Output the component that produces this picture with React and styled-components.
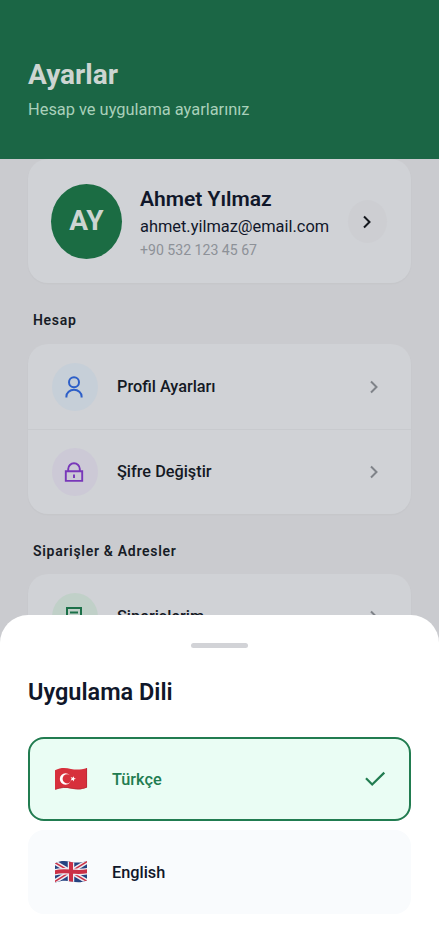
import React from "react";
import styled, { createGlobalStyle } from "styled-components";

const GlobalStyle = createGlobalStyle`
  body {
    margin: 0;
    background: #cacbcf;
    font-family: Roboto, "Liberation Sans", sans-serif;
  }
`;

const Screen = styled.div`
  position: relative;
  width: 100%;
  height: 952px;
  overflow: hidden;
  background: #cacbcf;
`;

const Header = styled.header`
  height: 159px;
  box-sizing: border-box;
  padding: 57px 28px 0;
  background: #1b6645;
`;

const Title = styled.h1`
  margin: 0;
  font-size: 28px;
  line-height: 36px;
  font-weight: 700;
  color: #cdd5d1;
`;

const Subtitle = styled.p`
  margin: 7px 0 0;
  font-size: 16.4px;
  line-height: 20px;
  color: #a9d0ba;
`;

const Content = styled.main`
  padding: 0 28px;
`;

const Card = styled.section`
  border-radius: 20px;
  background: #d0d2d6;
  box-shadow: 0 1px 2px rgba(0, 0, 0, 0.03);
`;

const ProfileCard = styled(Card)`
  display: flex;
  align-items: center;
  height: 124px;
  box-sizing: border-box;
  padding: 0 24px 0 23px;
`;

const Avatar = styled.div`
  display: flex;
  align-items: center;
  justify-content: center;
  width: 71px;
  height: 75px;
  box-sizing: border-box;
  padding-bottom: 2px;
  border-radius: 50%;
  background: #1b6c43;
  color: #cdd5d1;
  font-size: 28px;
  font-weight: 700;
`;

const ProfileInfo = styled.div`
  flex: 1;
  padding: 4px 0 0 18px;
  white-space: nowrap;
`;

const Name = styled.div`
  font-size: 21px;
  line-height: 26px;
  font-weight: 600;
  color: #10172a;
`;

const Email = styled.div`
  margin-top: 3px;
  font-size: 16.4px;
  line-height: 24px;
  color: #10172a;
`;

const Phone = styled.div`
  margin-top: 1px;
  font-size: 14.1px;
  line-height: 20px;
  color: #8d9198;
`;

const RoundButton = styled.button`
  display: flex;
  align-items: center;
  justify-content: center;
  width: 39px;
  height: 43px;
  padding: 2px 1px 0 0;
  border: 0;
  border-radius: 50%;
  background: #cdced2;
`;

const SectionLabel = styled.h2`
  margin: 28px 0 ${(props) => props.$gap}px 5px;
  font-size: 14px;
  line-height: 18px;
  font-weight: 600;
  letter-spacing: 0.7px;
  color: #171c26;
`;

const Row = styled.div`
  display: flex;
  align-items: center;
  height: 85px;
  box-sizing: border-box;
  padding: 0 31px 0 24px;

  & + & {
    border-top: 1px solid #c8cace;
  }
`;

const IconCircle = styled.div`
  display: flex;
  align-items: center;
  justify-content: center;
  width: 46px;
  height: 48px;
  box-sizing: border-box;
  padding-right: 2px;
  margin-right: 19px;
  border-radius: 50%;
  color: ${(props) => props.$color};
  background: ${(props) => props.$background};
`;

const RowLabel = styled.span`
  flex: 1;
  font-size: 16.3px;
  line-height: 24px;
  font-weight: 500;
  color: #141924;
`;

const Svg = styled.svg`
  display: block;
  flex: none;
  fill: none;
`;

const Chevron = styled(Svg)`
  color: ${(props) => props.$color};
`;

const Sheet = styled.div`
  position: absolute;
  left: 0;
  right: 0;
  bottom: 0;
  height: 337px;
  box-sizing: border-box;
  padding: 28px 28px 0;
  border-radius: 28px 28px 0 0;
  background: #fff;
`;

const Handle = styled.div`
  width: 57px;
  height: 5px;
  margin: 0 auto;
  border-radius: 3px;
  background: #d2d3d7;
`;

const SheetTitle = styled.h2`
  margin: 29px 0 29px;
  font-size: 23.5px;
  line-height: 31px;
  font-weight: 600;
  color: #10172a;
`;

const Option = styled.div`
  display: flex;
  align-items: center;
  height: 84px;
  box-sizing: border-box;
  margin-bottom: 9px;
  padding: 0 23px 0 24px;
  border: 2px solid ${(props) => (props.$selected ? "#217c50" : "#f9fbfd")};
  border-radius: 16px;
  background: ${(props) => (props.$selected ? "#eafdf4" : "#f9fbfd")};
  color: ${(props) => (props.$selected ? "#217c50" : "#10172a")};
`;

const OptionLabel = styled.span`
  flex: 1;
  margin-left: 24px;
  padding-top: 1px;
  font-size: 16.3px;
  line-height: 24px;
  font-weight: 500;
`;

const wave = "M1 3.2C7 .2 12 .9 17 1.9S27 2.8 33 .9V20.5C27 23 22 22.3 17 21.4S7 20.5 1 22.7Z";

const ChevronIcon = ({ color }) => (
  <Chevron $color={color} width="12" height="16" viewBox="0 0 12 16" stroke="currentColor" strokeWidth="2">
    <path d="M3 2.5 8.5 8 3 13.5" />
  </Chevron>
);

const UserIcon = () => (
  <Svg width="24" height="24" viewBox="0 0 24 24" stroke="currentColor" strokeWidth="2">
    <circle cx="12" cy="7.2" r="5" />
    <path d="M4.4 22.5V21.5a7.6 6.8 0 0 1 15.2 0V22.5" />
  </Svg>
);

const LockIcon = () => (
  <Svg width="24" height="24" viewBox="0 0 24 24" stroke="currentColor" strokeWidth="1.9">
    <path d="M3.8 11.3h16.4v9.6H3.8zM6.2 11.2V9.1a5.8 5.8 0 0 1 11.6 0v2.1M12 14.4v3.6" />
  </Svg>
);

const ReceiptIcon = () => (
  <Svg width="24" height="24" viewBox="0 0 24 24" stroke="currentColor" strokeWidth="2">
    <path d="M5 21V3h14V21zM8 7.5h8M8 12h8" />
  </Svg>
);

const TurkishFlag = () => (
  <Svg width="34" height="24" viewBox="0 0 34 24">
    <path d={wave} fill="#d7303c" />
    <mask id="crescent">
      <circle cx="11.5" cy="12" r="5.7" fill="#fff" />
      <circle cx="13.2" cy="11.8" r="4.6" fill="#000" />
    </mask>
    <path d="M0 0h34v24H0z" fill="#fff" mask="url(#crescent)" />
    <path d="m19.9 9.2-1.3 1.5-2-.6 1.1 1.7-1.1 1.7 2-.5 1.3 1.5.1-2 1.9-.8-1.9-.7z" fill="#fff" />
    <path d="M1.4 22.3C7 20.2 12 20 17 21.1S27 22.6 32.6 20.2V1.2" stroke="#b52a35" strokeWidth=".8" />
  </Svg>
);

const BritishFlag = () => (
  <Svg width="34" height="24" viewBox="0 0 34 24">
    <clipPath id="uk-wave">
      <path d={wave} />
    </clipPath>
    <g clipPath="url(#uk-wave)">
      <path d="M0 0h34v24H0z" fill="#264381" />
      <path d="M0 2 34 22M0 22 34 1" stroke="#eeebf1" strokeWidth="4.5" />
      <path d="M0 2 34 22M0 22 34 1" stroke="#cb3046" strokeWidth="1.5" />
      <path d="M17 0v24M0 12.5C11 9 22 14 34 11" stroke="#eeebf1" strokeWidth="6.5" />
      <path d="M17 0v24M0 12.5C11 9 22 14 34 11" stroke="#cb3046" strokeWidth="4" />
    </g>
  </Svg>
);

const CheckIcon = () => (
  <Svg width="22" height="18" viewBox="0 0 22 18" stroke="currentColor" strokeWidth="2.2">
    <path d="M2 8.3 8.2 14.5 20.3 2.6" />
  </Svg>
);

const SettingsRow = ({ label, icon, color, background }) => (
  <Row>
    <IconCircle $color={color} $background={background}>{icon}</IconCircle>
    <RowLabel>{label}</RowLabel>
    <ChevronIcon color="#7f8389" />
  </Row>
);

const LanguageOption = ({ flag, label, selected }) => (
  <Option $selected={selected}>
    {flag}
    <OptionLabel>{label}</OptionLabel>
    {selected && <CheckIcon />}
  </Option>
);

const App = () => {
  return (
    <Screen>
      <GlobalStyle />
      <Header>
        <Title>Ayarlar</Title>
        <Subtitle>Hesap ve uygulama ayarlarınız</Subtitle>
      </Header>
      <Content>
        <ProfileCard>
          <Avatar>AY</Avatar>
          <ProfileInfo>
            <Name>Ahmet Yılmaz</Name>
            <Email>ahmet.yilmaz@email.com</Email>
            <Phone>+90 532 123 45 67</Phone>
          </ProfileInfo>
          <RoundButton aria-label="Profil">
            <ChevronIcon color="#15181e" />
          </RoundButton>
        </ProfileCard>

        <SectionLabel $gap={15}>Hesap</SectionLabel>
        <Card>
          <SettingsRow label="Profil Ayarları" icon={<UserIcon />} color="#2d5fc8" background="#c6cfd8" />
          <SettingsRow label="Şifre Değiştir" icon={<LockIcon />} color="#7837b9" background="#ccc9d6" />
        </Card>

        <SectionLabel $gap={14}>Siparişler &amp; Adresler</SectionLabel>
        <Card>
          <SettingsRow label="Siparişlerim" icon={<ReceiptIcon />} color="#1b7048" background="#c0d0c8" />
        </Card>
      </Content>

      <Sheet>
        <Handle />
        <SheetTitle>Uygulama Dili</SheetTitle>
        <LanguageOption flag={<TurkishFlag />} label="Türkçe" selected />
        <LanguageOption flag={<BritishFlag />} label="English" />
      </Sheet>
    </Screen>
  );
};

export default App;
